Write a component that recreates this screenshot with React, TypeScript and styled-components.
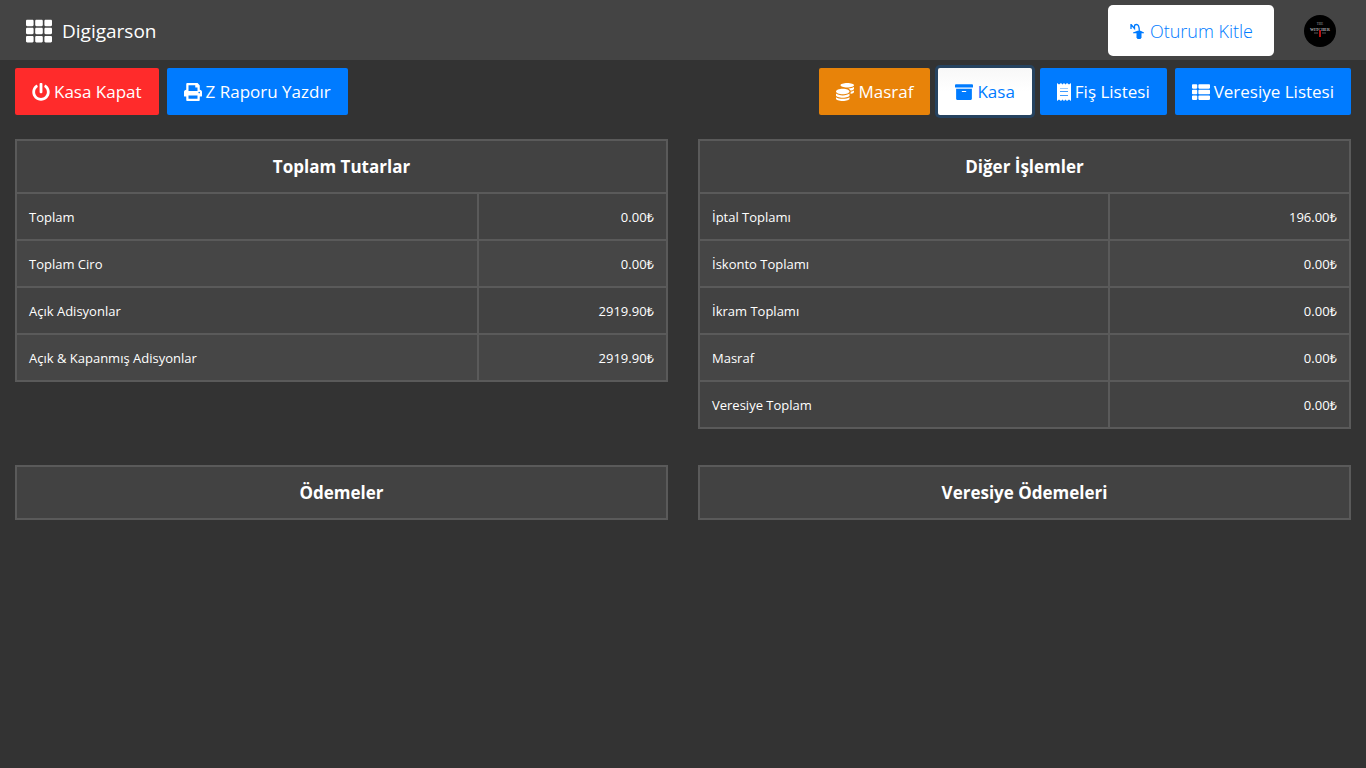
import React from "react";
import styled, { createGlobalStyle } from "styled-components";
import { FaTh, FaPowerOff, FaPrint, FaCoins, FaArchive, FaThList } from "react-icons/fa";

const GlobalStyle = createGlobalStyle`
  *, *::before, *::after { box-sizing: border-box; }
  body {
    margin: 0;
    min-height: 100vh;
    background: #333;
    color: #fff;
    font-family: "Segoe UI", "Open Sans", "Noto Sans", sans-serif;
    font-size: 14px;
    line-height: 21px;
  }
  button { font-family: inherit; cursor: pointer; }
`;

const Header = styled.header`
  display: flex;
  align-items: center;
  justify-content: space-between;
  height: 60px;
  padding: 1px 30px 0 26px;
  background: #444;
`;

const Brand = styled.a`
  display: flex;
  align-items: center;
  gap: 10px;
  color: #fff;
  font-size: 19px;
  line-height: 30px;
  text-decoration: none;
  svg { width: 26px; height: 26px; }
`;

const Session = styled.div`
  display: flex;
  align-items: center;
  gap: 30px;
`;

const LockButton = styled.button`
  display: flex;
  align-items: center;
  gap: 6px;
  height: 51px;
  padding: 0 21px;
  border: 0;
  border-radius: 5px;
  background: #fff;
  color: #007bff;
  font-size: 18px;
  font-weight: 300;
`;

const Avatar = styled.svg`
  display: block;
  width: 32px;
  height: 32px;
  font-family: "Liberation Serif", serif;
  font-weight: 700;
  text-anchor: middle;
`;

const Toolbar = styled.div`
  display: flex;
  justify-content: space-between;
  padding: 8px 15px 0;
`;

const Group = styled.div`
  display: flex;
  gap: 8px;
`;

const tones = {
  danger: { bg: "#ff2b2b", fg: "#fff", ring: "none" },
  primary: { bg: "#007bff", fg: "#fff", ring: "none" },
  warning: { bg: "#e88309", fg: "#fff", ring: "none" },
  active: { bg: "linear-gradient(#f8f8f8, #fff 50%)", fg: "#007bff", ring: "0 0 0 3px #264360" },
};

const ToolButton = styled.button<{ $tone: keyof typeof tones }>`
  display: flex;
  align-items: center;
  gap: 4px;
  padding: 10px 17px;
  border: 0;
  border-radius: 2px;
  background: ${(p) => tones[p.$tone].bg};
  color: ${(p) => tones[p.$tone].fg};
  box-shadow: ${(p) => tones[p.$tone].ring};
  font-size: 17px;
  line-height: 27px;
  white-space: nowrap;
`;

const Panels = styled.main`
  display: grid;
  grid-template-columns: 1fr 1fr;
  gap: 36px 30px;
  align-items: start;
  padding: 24px 15px;
`;

const Table = styled.table<{ $split: string }>`
  width: 100%;
  border-collapse: collapse;
  table-layout: fixed;
  background: #424242;
  th, td { border: 2px solid #5a5a5a; padding: 13px 12px 11px; }
  thead th { padding: 12px; }
  col:first-child { width: ${(p) => p.$split}; }
  tbody tr:nth-child(even) { background: #464646; }
`;

const Title = styled.th`
  font-size: 17px;
  line-height: 27px;
  font-weight: 700;
  text-align: center;
`;

const Label = styled.th`
  font-size: 13px;
  font-weight: 400;
  text-align: left;
`;

const Amount = styled.td`
  font-size: 13px;
  text-align: right;
`;

type PanelProps = { title: string; split?: string; rows?: [string, string][] };

function Panel({ title, split = "70%", rows = [] }: PanelProps) {
  return (
    <Table $split={split}>
      <colgroup><col /><col /></colgroup>
      <thead><tr><Title colSpan={2}>{title}</Title></tr></thead>
      <tbody>
        {rows.map(([label, amount]) => (
          <tr key={label}>
            <Label scope="row">{label}</Label>
            <Amount>{amount}₺</Amount>
          </tr>
        ))}
      </tbody>
    </Table>
  );
}

const totals: [string, string][] = [
  ["Toplam", "0.00"],
  ["Toplam Ciro", "0.00"],
  ["Açık Adisyonlar", "2919.90"],
  ["Açık & Kapanmış Adisyonlar", "2919.90"],
];

const others: [string, string][] = [
  ["İptal Toplamı", "196.00"],
  ["İskonto Toplamı", "0.00"],
  ["İkram Toplamı", "0.00"],
  ["Masraf", "0.00"],
  ["Veresiye Toplam", "0.00"],
];

function SessionIcon() {
  return (
    <svg width="15" height="16" viewBox="0 0 15 16" fill="none" stroke="currentColor" aria-hidden="true">
      <path d="M2 1v5M2 1.500L5.500 5.500V3Q5.500 1.500 7.500 1.500Q10.300 1.500 10.300 8" strokeWidth="1.300" />
      <path d="M4 10.300V9.500L8.500 7.700h3L15 9.500v.8z" fill="currentColor" stroke="none" />
      <path d="M7.500 10H12.500v4.500L11.500 16H8.500l-1-1.500z" fill="currentColor" stroke="none" />
    </svg>
  );
}

function ReceiptIcon() {
  return (
    <svg width="14" height="18" viewBox="0 0 14 18" fill="none" aria-hidden="true">
      <path d="M0 0L2 1.500L4 0L5.500 1.500L7 0L8.500 1.500L10 0L12 1.500L14 0V18L12 16.500L10 18L8.500 16.500L7 18L5.500 16.500L4 18L2 16.500L0 18Z" fill="currentColor" />
      <path d="M3 5.500H11" stroke="#007bff" strokeOpacity="0.4" />
      <path d="M3 8.500H11M3 12.500H11" stroke="#007bff" strokeOpacity="0.75" />
    </svg>
  );
}

export default function App() {
  return (
    <>
      <GlobalStyle />
      <Header>
        <Brand href="#"><FaTh />Digigarson</Brand>
        <Session>
          <LockButton type="button"><SessionIcon />Oturum Kitle</LockButton>
          <Avatar viewBox="0 0 32 32" role="img" aria-label="Profil">
            <circle cx="16" cy="16" r="16" fill="#000" />
            <text x="16" y="10" fontSize="3" fill="#777">THE</text>
            <text x="16" y="16" fontSize="4" fill="#b5b5b5">WITCHER</text>
            <path d="M10 18h4M18 18h4" stroke="#555" />
            <path d="M16 15v7" stroke="#b11" strokeWidth="2" />
          </Avatar>
        </Session>
      </Header>
      <Toolbar>
        <Group>
          <ToolButton type="button" $tone="danger"><FaPowerOff size={18} />Kasa Kapat</ToolButton>
          <ToolButton type="button" $tone="primary"><FaPrint size={18} />Z Raporu Yazdır</ToolButton>
        </Group>
        <Group>
          <ToolButton type="button" $tone="warning"><FaCoins size={18} />Masraf</ToolButton>
          <ToolButton type="button" $tone="active"><FaArchive size={18} />Kasa</ToolButton>
          <ToolButton type="button" $tone="primary"><ReceiptIcon />Fiş Listesi</ToolButton>
          <ToolButton type="button" $tone="primary"><FaThList size={18} />Veresiye Listesi</ToolButton>
        </Group>
      </Toolbar>
      <Panels>
        <Panel title="Toplam Tutarlar" split="71%" rows={totals} />
        <Panel title="Diğer İşlemler" split="63%" rows={others} />
        <Panel title="Ödemeler" />
        <Panel title="Veresiye Ödemeleri" />
      </Panels>
    </>
  );
}
